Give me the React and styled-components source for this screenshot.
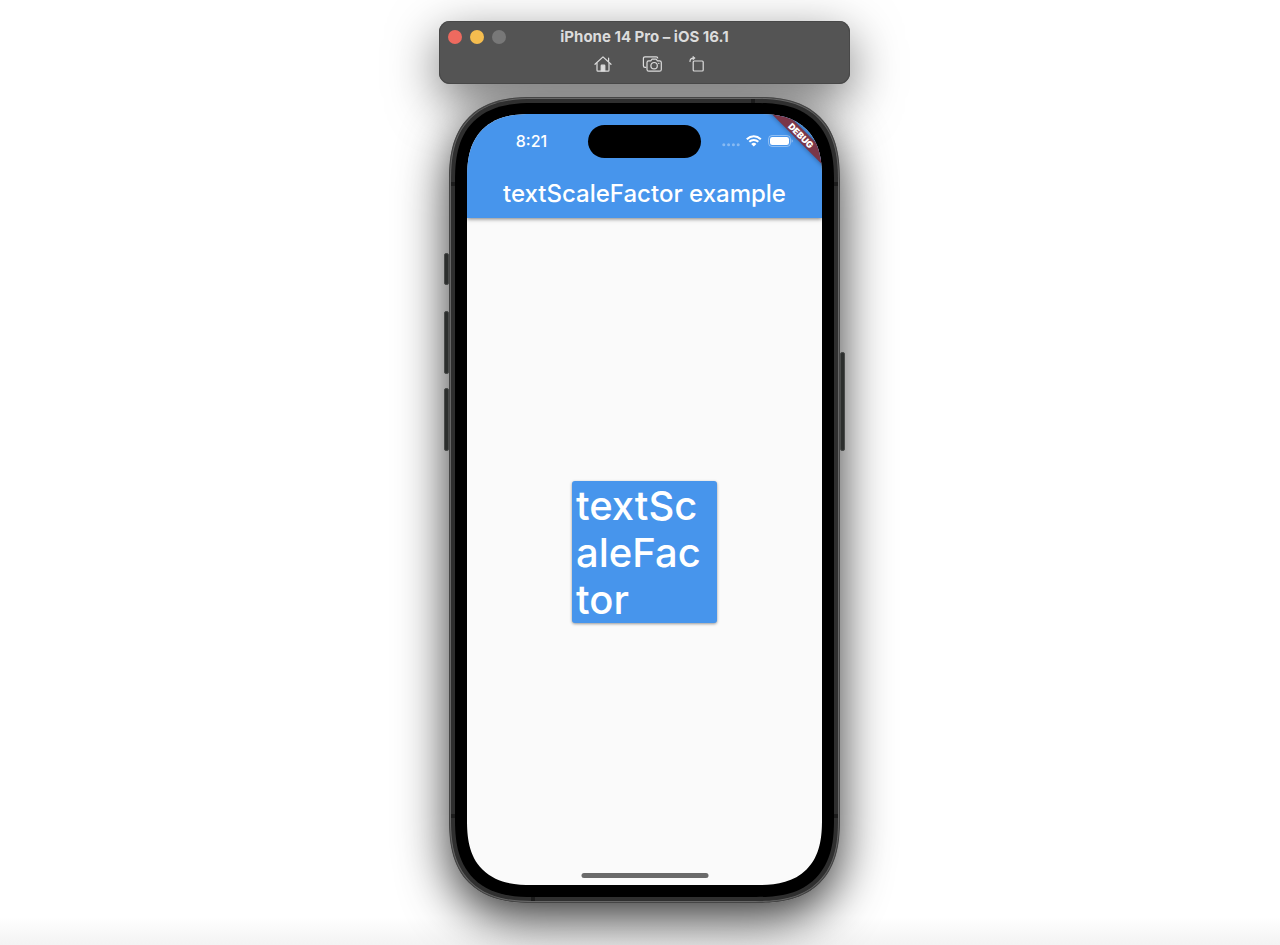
import styled, {createGlobalStyle,css} from 'styled-components';

const GlobalStyle=createGlobalStyle`
	*{
		box-sizing:border-box;
	}
	body{
		margin:0;
		background:#fff;
		font-family:'Inter','Roboto',sans-serif;
	}
	button{
		border:none;
		padding:0;
		font-family:inherit;
		cursor:pointer;
	}
`
// rounder "continuous" corners where the browser has them
const corner=(plain,smooth)=>css`
	border-radius:${plain}px;
	@supports (corner-shape:superellipse(1.35)){
		border-radius:${smooth}px;
		corner-shape:superellipse(1.35);
	}
`
const Page=styled.main`
	isolation:isolate;
	min-height:100vh;
	padding:21px 0 42px 9px;
	display:flex;
	flex-direction:column;
	align-items:center;
	gap:13px;
	overflow:hidden;
	background:linear-gradient(to top,#f3f3f3,#fff 28px);
`
const Toolbar=styled.header`
	width:100%;
	max-width:411px;
	height:63px;
	padding:0 9px;
	border-radius:11px;
	background:#545454;
	box-shadow:inset 0 0 0 1px #484848,inset 0 2px 0 -1px #7c7c7c,0 16px 50px rgba(0,0,0,.55);
`
const TitleRow=styled.div`
	height:31px;
	display:grid;
	grid-template-columns:1fr auto 1fr;
	align-items:center;
`
const Lights=styled.div`
	display:flex;
	gap:8px;
`
const Light=styled.button`
	width:14px;
	height:14px;
	border-radius:50%;
	background:${props=>props.$color};
`
const WindowTitle=styled.h1`
	margin:0;
	font-size:15px;
	line-height:20px;
	font-weight:700;
	color:#dcdcdc;
`
const Tools=styled.div`
	display:flex;
	justify-content:center;
	gap:27px;
	padding:4px 0 0 10px;
`
const Tool=styled.button`
	display:flex;
	background:none;
	color:#dcdcdc;
`
const Phone=styled.section`
	position:relative;
	width:391px;
	${corner(70,84)}
	padding:2px;
	background:#666;
	box-shadow:inset 0 0 0 1px #454545;
	&::before{
		content:'';
		position:absolute;
		z-index:-1;
		inset:0;
		${corner(70,84)}
		box-shadow:0 16px 50px rgba(0,0,0,.8);
	}
`
const Frame=styled.div`
	padding:4px;
	${corner(68,82)}
	background:#2f2f2f;
`
const Bezel=styled.div`
	padding:11px 12px 12px;
	${corner(64,78)}
	background:#000;
`
const SideButton=styled.span`
	position:absolute;
	${props=>props.$side}:-5px;
	top:${props=>props.$top}px;
	width:5px;
	height:${props=>props.$height}px;
	border-radius:2px;
	background:#2c2e2d;
	border:1px solid #484a49;
`
const Antenna=styled.span`
	position:absolute;
	${props=>props.$side}:2px;
	${props=>props.$from}:${props=>props.$at}px;
	width:4px;
	height:4px;
	background:#1c1c1c;
`
const Screen=styled.div`
	position:relative;
	aspect-ratio:355 / 771;
	display:flex;
	flex-direction:column;
	overflow:hidden;
	${corner(52,65)}
	background:#fafafa;
`
const AppBar=styled.header`
	height:104px;
	flex:none;
	background:#4795ec;
	color:#fff;
	box-shadow:0 1px 4px rgba(0,0,0,.5);
`
const StatusBar=styled.div`
	height:54px;
	display:grid;
	grid-template-columns:1fr 113px 1fr;
	align-items:center;
`
const Time=styled.span`
	padding-left:8px;
	text-align:center;
	font-size:16px;
	line-height:20px;
	font-weight:500;
`
const Island=styled.div`
	height:33px;
	border-radius:17px;
	background:#000;
`
const StatusIcons=styled.div`
	padding-left:21px;
	display:flex;
	align-items:center;
`
const AppTitle=styled.h2`
	margin:0;
	font-size:24px;
	line-height:52px;
	font-weight:500;
	text-align:center;
`
const Body=styled.div`
	flex:1;
	display:flex;
	align-items:center;
	justify-content:center;
`
const ElevatedButton=styled.button`
	width:145px;
	padding:1px 16px 0 4px;
	border-radius:3px;
	background:#4795ec;
	color:#fff;
	font-size:40px;
	line-height:47px;
	font-weight:500;
	text-align:left;
	word-break:break-all;
	box-shadow:0 1px 3px rgba(0,0,0,.4);
`
const HomeIndicator=styled.div`
	position:absolute;
	bottom:7px;
	left:50%;
	width:127px;
	height:5px;
	border-radius:3px;
	background:#6a6a6a;
	transform:translateX(-50%);
`
const Ribbon=styled.div`
	position:absolute;
	top:16px;
	right:-19px;
	width:80px;
	height:11px;
	background:#7a3648;
	color:#fff;
	font-size:9px;
	line-height:11px;
	font-weight:900;
	text-align:center;
	transform:rotate(45deg);
	box-shadow:0 0 5px rgba(0,0,0,.4);
`

const lights=[
	{name:"Close",color:"#ee6a5f"},
	{name:"Minimize",color:"#f5bd4f"},
	{name:"Zoom",color:"#787878"},
]
const sideButtons=[
	{side:"left",top:156,height:32},
	{side:"left",top:214,height:63},
	{side:"left",top:291,height:63},
	{side:"right",top:255,height:99},
]
const antennas=[
	{side:"left",from:"top",at:85},
	{side:"left",from:"bottom",at:85},
	{side:"right",from:"top",at:85},
	{side:"right",from:"bottom",at:85},
	{side:"top",from:"right",at:85},
	{side:"bottom",from:"left",at:82},
]

const HomeIcon = () => (
	<svg width="21" height="16" viewBox="0 0 21 16" fill="none" stroke="currentColor" strokeWidth="1.2" strokeLinecap="round" strokeLinejoin="round">
		<path d="M1 8.3 9 .9l8 7.4M14.6 5.7V2.2" />
		<path d="M3 7v7.2q0 1 1 1h10q1 0 1-1V7" />
		<path d="M7.2 15V9.8q0-.6.6-.6h2.4q.6 0 .6.6V15z" fill="currentColor" />
	</svg>
)
const CameraIcon = () => (
	<svg width="20" height="16" viewBox="0 0 20 16" fill="none" stroke="currentColor" strokeWidth="1.2" strokeLinejoin="round">
		<path d="M4.3 11.4H3Q1.4 11.4 1.4 9.8V2.4Q1.4.8 3 .8h11.2q1.6 0 1.6 1.8" />
		<path d="M6.8 4.8h2.1l1-1.6h4.4l1 1.6h2.2q1.8 0 1.8 1.8v6.8q0 1.8-1.8 1.8H6.8Q5 15.2 5 13.4V6.6q0-1.8 1.8-1.8z" />
		<circle cx="12.1" cy="9.7" r="3.2" />
		<circle cx="16.8" cy="7.4" r=".7" fill="currentColor" stroke="none" />
	</svg>
)
const RotateIcon = () => (
	<svg width="16" height="16" viewBox="0 0 16 16" fill="none" stroke="currentColor" strokeWidth="1.2" strokeLinecap="round" strokeLinejoin="round">
		<rect x="4.2" y="5" width="10" height="10" rx="1" />
		<path d="M1 5.4Q1 2.2 4.4 2.1" />
		<path d="M4.2.4 6.2 2.1 4.2 3.8z" fill="currentColor" strokeWidth=".6" />
	</svg>
)
const SignalIcon = () => (
	<svg width="18" height="12" viewBox="0 0 18 12" fill="#fff" opacity=".35">
		<circle cx="1.8" cy="9.8" r="1.5" />
		<circle cx="6.6" cy="9.8" r="1.5" />
		<circle cx="11.4" cy="9.8" r="1.5" />
		<circle cx="16.2" cy="9.8" r="1.5" />
	</svg>
)
const WifiIcon = () => (
	<svg width="28" height="12" viewBox="-6 0 28 12" fill="none" stroke="#fff" strokeWidth="2.1">
		<path d="M.8 4.2Q4 1.2 7.8 1.2t7 3" />
		<path d="M3.3 6.8Q5.2 5 7.8 5t4.5 1.8" />
		<path d="M5.2 8.9q2.6-2.3 5.2 0L7.8 11.6z" fill="#fff" stroke="none" />
	</svg>
)
const BatteryIcon = () => (
	<svg width="26" height="12" viewBox="0 0 26 12">
		<rect x=".5" y=".5" width="22" height="11" rx="3.6" fill="none" stroke="#fff" strokeOpacity=".4" />
		<rect x="2" y="2" width="19" height="8" rx="2.3" fill="#fff" />
		<path d="M23.6 4.2q1.3.5 1.3 1.8t-1.3 1.8z" fill="#fff" opacity=".45" />
	</svg>
)

const App = () => {
	return (
		<>
			<GlobalStyle />
			<Page>
				<Toolbar>
					<TitleRow>
						<Lights>
							{lights.map(l=>(
								<Light key={l.name} $color={l.color} aria-label={l.name} />
							))}
						</Lights>
						<WindowTitle>iPhone 14 Pro – iOS 16.1</WindowTitle>
					</TitleRow>
					<Tools>
						<Tool aria-label="Home"><HomeIcon /></Tool>
						<Tool aria-label="Screenshot"><CameraIcon /></Tool>
						<Tool aria-label="Rotate"><RotateIcon /></Tool>
					</Tools>
				</Toolbar>
				<Phone>
					{sideButtons.map(b=>(
						<SideButton key={b.side+b.top} $side={b.side} $top={b.top} $height={b.height} />
					))}
					{antennas.map(a=>(
						<Antenna key={a.side+a.from} $side={a.side} $from={a.from} $at={a.at} />
					))}
					<Frame>
						<Bezel>
							<Screen>
								<AppBar>
									<StatusBar>
										<Time>8:21</Time>
										<Island />
										<StatusIcons>
											<SignalIcon />
											<WifiIcon />
											<BatteryIcon />
										</StatusIcons>
									</StatusBar>
									<AppTitle>textScaleFactor example</AppTitle>
								</AppBar>
								<Body>
									<ElevatedButton>textScaleFactor</ElevatedButton>
								</Body>
								<HomeIndicator />
								<Ribbon>DEBUG</Ribbon>
							</Screen>
						</Bezel>
					</Frame>
				</Phone>
			</Page>
		</>
	)
}

export default App
